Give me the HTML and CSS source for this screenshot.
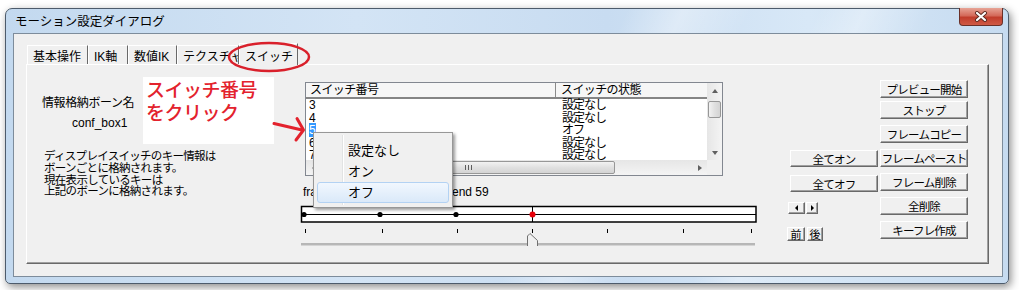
FILE: index.html
```html
<!DOCTYPE html>
<html lang="ja">
<head>
    <meta charset="UTF-8">
    <meta name="viewport" content="width=device-width, initial-scale=1.0">
    <title>モーション設定ダイアログ</title>
    <link rel="stylesheet" href="styles.css">
</head>
<body>
    <div class="window">
        <div class="titlebar">
            <span class="title">モーション設定ダイアログ</span>
            <div class="close-btn">
                <svg width="14" height="11" viewBox="0 0 14 11">
                    <path d="M3 2 L11 9 M11 2 L3 9" stroke="#5a2a22" stroke-width="4" stroke-linecap="round"/>
                    <path d="M3 2 L11 9 M11 2 L3 9" stroke="#ffffff" stroke-width="2.2" stroke-linecap="round"/>
                </svg>
            </div>
        </div>

        <div class="client">
            <div class="tabs">
                <div class="tab basic">基本操作</div>
                <div class="tab ik">IK軸</div>
                <div class="tab num">数値IK</div>
                <div class="tab tex">テクスチャ</div>
                <div class="tab active">スイッチ</div>
            </div>

            <div class="panel">
                <!-- 左側：ボーン情報 -->
                <div class="col-info">
                    <div class="bone-label">情報格納ボーン名</div>
                    <div class="bone-name">conf_box1</div>
                    <div class="desc">
                        <div>ディスプレイスイッチのキー情報は</div>
                        <div>ボーンごとに格納されます。</div>
                        <div>現在表示しているキーは</div>
                        <div>上記のボーンに格納されます。</div>
                    </div>
                </div>

                <!-- 中央：スイッチ一覧とタイムライン -->
                <div class="col-main">
                    <div class="listview">
                        <div class="lv-body">
                            <div class="lv-content">
                                <div class="lv-header">
                                    <div class="hd c1">スイッチ番号</div>
                                    <div class="hd c2">スイッチの状態</div>
                                </div>
                                <div class="lv-row"><span class="c1">3</span><span class="c2">設定なし</span></div>
                                <div class="lv-row"><span class="c1">4</span><span class="c2">設定なし</span></div>
                                <div class="lv-row"><span class="c1"><span class="sel">5</span></span><span class="c2">オフ</span></div>
                                <div class="lv-row"><span class="c1">6</span><span class="c2">設定なし</span></div>
                                <div class="lv-row"><span class="c1">7</span><span class="c2">設定なし</span></div>
                            </div>
                            <div class="vscroll">
                                <div class="sb-btn"><span class="tri-up"></span></div>
                                <div class="vthumb"></div>
                                <div class="sb-fill"></div>
                                <div class="sb-btn"><span class="tri-down"></span></div>
                            </div>
                        </div>
                        <div class="hscroll-row">
                            <div class="hscroll">
                                <div class="sb-btn"><span class="tri-left"></span></div>
                                <div class="hthumb"><span class="grip"></span></div>
                                <div class="sb-fill"></div>
                                <div class="sb-btn"><span class="tri-right"></span></div>
                            </div>
                            <div class="sb-corner"></div>
                        </div>
                    </div>

                    <div class="frame-info">
                        <span class="frame-cur">frame 56</span><span>end 59</span>
                    </div>

                    <svg class="timeline" width="460" height="46" viewBox="0 0 460 46">
                        <rect x="1.5" y="1.5" width="454.5" height="15.5" fill="#ffffff" stroke="#000" stroke-width="1.5"/>
                        <line x1="1.5" y1="9.5" x2="456" y2="9.5" stroke="#000" stroke-width="1"/>
                        <circle cx="4" cy="9.5" r="2.6" fill="#000"/>
                        <circle cx="80" cy="9.5" r="2.6" fill="#000"/>
                        <circle cx="156" cy="9.5" r="2.6" fill="#000"/>
                        <line x1="232.5" y1="1.5" x2="232.5" y2="17" stroke="#000" stroke-width="1"/>
                        <circle cx="232.5" cy="9.5" r="3" fill="#e8000a"/>
                        <g stroke="#000" stroke-width="1">
                            <line x1="5.5" y1="24" x2="5.5" y2="28"/>
                            <line x1="82.5" y1="24" x2="82.5" y2="28"/>
                            <line x1="157.5" y1="24" x2="157.5" y2="28"/>
                            <line x1="232.5" y1="24" x2="232.5" y2="28"/>
                            <line x1="307.5" y1="24" x2="307.5" y2="28"/>
                            <line x1="383.5" y1="24" x2="383.5" y2="28"/>
                            <line x1="451.5" y1="24" x2="451.5" y2="28"/>
                        </g>
                        <line x1="1" y1="39" x2="455" y2="39" stroke="#7c7c7c" stroke-width="1"/>
                        <line x1="1" y1="40" x2="455" y2="40" stroke="#b8b8b8" stroke-width="1"/>
                        <path d="M227.5 41 V31 L230 28.5 L237.5 35.5 V41 Z" fill="#f0f0f0"/>
                        <path d="M227.5 41 V31 L230 28.5 L237.5 35.5 V41" fill="none" stroke="#707070" stroke-width="1"/>
                    </svg>
                </div>

                <!-- 右側：ボタン群 -->
                <div class="col-buttons">
                    <div class="btn-col-left">
                        <div class="btn wide">全てオン</div>
                        <div class="btn wide off">全てオフ</div>
                        <div class="arrow-row">
                            <div class="btn arrow-l"><span class="tri-left dark"></span></div>
                            <div class="btn arrow-r"><span class="tri-right dark"></span></div>
                        </div>
                        <div class="nav-row">
                            <div class="btn nav prev">前</div>
                            <div class="btn nav next">後</div>
                        </div>
                    </div>
                    <div class="btn-col-right">
                        <div class="btn side">プレビュー開始</div>
                        <div class="btn side stop">ストップ</div>
                        <div class="btn side">フレームコピー</div>
                        <div class="btn side">フレームペースト</div>
                        <div class="btn side">フレーム削除</div>
                        <div class="btn side">全削除</div>
                        <div class="btn side">キーフレ作成</div>
                    </div>
                </div>
            </div>
        </div>
    </div>

    <!-- 注釈 -->
    <div class="note">スイッチ番号<br>をクリック</div>

    <svg class="note-arrow" width="40" height="32" viewBox="0 0 40 32">
        <path d="M4 9.5 L32 16" stroke="#e3222d" stroke-width="3" fill="none" stroke-linecap="round"/>
        <path d="M27 4.5 L33.5 16 L26 26" stroke="#e3222d" stroke-width="3" fill="none" stroke-linecap="round" stroke-linejoin="round"/>
    </svg>

    <svg class="tab-circle" width="90" height="36" viewBox="0 0 90 36">
        <ellipse cx="43" cy="17" rx="40" ry="14" fill="none" stroke="#d9202b" stroke-width="2.5"/>
    </svg>

    <div class="context-menu">
        <div class="menu-item">設定なし</div>
        <div class="menu-item">オン</div>
        <div class="menu-item hover">オフ</div>
    </div>
</body>
</html>
```

FILE: styles.css
```css
body {
    margin: 0;
    width: 1019px;
    height: 290px;
    position: relative;
    overflow: hidden;
    background: #ffffff;
    font-family: "Liberation Sans", "Noto Sans CJK JP", sans-serif;
    font-size: 12px;
    color: #000;
}

/* ウィンドウ枠 */
.window {
    margin: 8px 0 0 5px;
    width: 1004px;
    height: 276px;
    box-sizing: border-box;
    border: 1px solid #4d5b6b;
    border-radius: 7px 7px 5px 5px;
    background:
        linear-gradient(115deg, rgba(255,255,255,0) 55%, rgba(255,255,255,0.35) 60%, rgba(255,255,255,0) 66%, rgba(255,255,255,0) 72%, rgba(255,255,255,0.3) 76%, rgba(255,255,255,0) 82%),
        linear-gradient(to right, #c3d9ef, #d3e4f5 35%, #c8dcf1 60%, #d8e8f7 80%, #c6dbf0);
    box-shadow: 2px 3px 8px rgba(0,0,0,0.45);
}

.titlebar {
    display: flex;
    height: 24px;
}

.title {
    padding: 6px 0 0 9px;
    line-height: 14px;
    font-size: 12.5px;
}

.close-btn {
    margin: -1px 5px 0 auto;
    width: 44px;
    height: 18px;
    box-sizing: border-box;
    border: 1px solid #6a3028;
    border-top: none;
    border-radius: 0 0 4px 4px;
    background: linear-gradient(#e7a496, #d46a5a 45%, #c13d2c 55%, #cf5a45);
    display: flex;
    align-items: center;
    justify-content: center;
}

.client {
    margin-left: 7px;
    width: 990px;
    height: 244px;
    box-sizing: border-box;
    border: 1px solid #7d8c9b;
    background: #f0f0f0;
}

/* タブ */
.tabs {
    display: flex;
    margin: 11px 0 0 13px;
    height: 19px;
}

.tab {
    box-sizing: border-box;
    height: 19px;
    padding: 4px 0 0 5px;
    line-height: 14px;
    border-top: 1px solid #fff;
    border-left: 1px solid #fff;
    border-right: 1px solid #696969;
    background: #f0f0f0;
    white-space: nowrap;
    overflow: hidden;
}

.tab.basic { width: 61px; }
.tab.ik { width: 40px; }
.tab.num { width: 49px; }
.tab.tex { width: 62px; }

.tab.active {
    width: 59px;
    height: 22px;
    margin-top: -2px;
    padding-top: 6px;
    position: relative;
    z-index: 1;
}

.panel {
    margin-left: 12px;
    width: 963px;
    height: 200px;
    box-sizing: border-box;
    border: 1px solid;
    border-color: #fff #696969 #696969 #fff;
    box-shadow: inset -1px -1px 0 #a0a0a0;
    display: flex;
}

/* 左カラム */
.col-info {
    width: 277px;
    flex-shrink: 0;
}

.bone-label {
    margin-top: 31px;
    padding-left: 15px;
    line-height: 14px;
    letter-spacing: -0.4px;
}

.bone-name {
    margin-top: 6px;
    padding-left: 45px;
    line-height: 14px;
}

.desc {
    margin-top: 21px;
    padding-left: 17px;
    font-size: 11.5px;
    line-height: 11.8px;
    letter-spacing: -0.7px;
    white-space: nowrap;
}

/* 中央カラム */
.col-main {
    width: 456px;
    flex-shrink: 0;
}

.listview {
    margin: 17px 0 0 1px;
    width: 418px;
    height: 94px;
    box-sizing: border-box;
    border: 1px solid #828790;
    background: #fff;
    display: flex;
    flex-direction: column;
    overflow: hidden;
}

.lv-body {
    flex: 1;
    display: flex;
    min-height: 0;
}

.lv-content {
    flex: 1;
    overflow: hidden;
}

.lv-header {
    display: flex;
    height: 16px;
    box-sizing: border-box;
    border-bottom: 2px solid #858585;
    background: #f6f6f6;
}

.hd {
    line-height: 14px;
    letter-spacing: -0.6px;
    white-space: nowrap;
}

.hd.c1 {
    width: 250px;
    box-sizing: border-box;
    padding-left: 4px;
    border-right: 1px solid #8a8a8a;
}

.hd.c2 {
    padding-left: 5px;
}

.lv-row {
    display: flex;
    line-height: 12.5px;
    height: 12.5px;
    letter-spacing: -1px;
    white-space: nowrap;
}

.lv-row .c1 {
    width: 250px;
    box-sizing: border-box;
    padding-left: 3px;
}

.lv-row .c2 {
    padding-left: 6px;
}

.sel {
    background: #3399ff;
    color: #fff;
    padding: 0 1px 0 0;
}

/* スクロールバー */
.vscroll {
    width: 15px;
    display: flex;
    flex-direction: column;
    background: linear-gradient(to right, #e6e6e6, #f4f4f4);
}

.hscroll-row {
    height: 15px;
    display: flex;
}

.hscroll {
    flex: 1;
    display: flex;
    background: linear-gradient(#e6e6e6, #f4f4f4);
}

.sb-btn {
    width: 15px;
    height: 15px;
    flex-shrink: 0;
    display: flex;
    align-items: center;
    justify-content: center;
}

.sb-fill {
    flex: 1;
}

.sb-corner {
    width: 15px;
    background: #f0f0f0;
}

.vthumb {
    margin: 3px 1px 0 1px;
    height: 15px;
    border: 1px solid #979797;
    border-radius: 2px;
    background: linear-gradient(to right, #f2f2f2, #e0e0e0 50%, #d4d4d4);
}

.hthumb {
    margin: 1px 0;
    width: 294px;
    box-sizing: border-box;
    border: 1px solid #979797;
    border-radius: 2px;
    background: linear-gradient(#f2f2f2, #e0e0e0 50%, #d4d4d4);
    display: flex;
    align-items: center;
    justify-content: center;
}

.grip {
    width: 7px;
    height: 5px;
    background: repeating-linear-gradient(to right, #5c5c5c 0 1px, transparent 1px 3px);
}

.tri-up, .tri-down, .tri-left, .tri-right {
    width: 0;
    height: 0;
}

.tri-up {
    border-left: 3.5px solid transparent;
    border-right: 3.5px solid transparent;
    border-bottom: 4px solid #606060;
}

.tri-down {
    border-left: 3.5px solid transparent;
    border-right: 3.5px solid transparent;
    border-top: 4px solid #606060;
}

.tri-left {
    border-top: 3.5px solid transparent;
    border-bottom: 3.5px solid transparent;
    border-right: 4px solid #606060;
}

.tri-right {
    border-top: 3.5px solid transparent;
    border-bottom: 3.5px solid transparent;
    border-left: 4px solid #606060;
}

.tri-left.dark { border-right-color: #000; border-top-width: 3px; border-bottom-width: 3px; border-right-width: 3px; }
.tri-right.dark { border-left-color: #000; border-top-width: 3px; border-bottom-width: 3px; border-left-width: 3px; }

.frame-info {
    margin: 10px 0 0 -1px;
    height: 12px;
    line-height: 12px;
    white-space: nowrap;
}

.frame-cur {
    display: inline-block;
    width: 149px;
}

.timeline {
    display: block;
    margin: 7px 0 0 -4px;
}

/* 右側ボタン */
.col-buttons {
    flex: 1;
    display: flex;
    padding-left: 27px;
}

.btn {
    box-sizing: border-box;
    border: 1px solid;
    border-color: #fff #696969 #696969 #fff;
    box-shadow: inset -1px -1px 0 #a0a0a0;
    background: #f0f0f0;
    display: flex;
    align-items: center;
    justify-content: center;
    font-size: 11.5px;
    letter-spacing: -0.8px;
    white-space: nowrap;
}

.btn-col-left {
    width: 93px;
    padding-top: 85px;
}

.btn.wide {
    margin-left: 3px;
    width: 88px;
    height: 17px;
}

.btn.wide.off {
    margin-top: 8px;
}

.arrow-row {
    display: flex;
    gap: 1px;
    margin: 10px 0 0 1px;
}

.btn.arrow-l {
    width: 17px;
    height: 12px;
}

.btn.arrow-r {
    width: 12px;
    height: 12px;
}

.nav-row {
    display: flex;
    gap: 2px;
    margin-top: 13px;
}

.btn.nav {
    height: 14px;
    font-size: 11px;
    letter-spacing: 0;
}

.btn.prev { width: 18px; }
.btn.next { width: 16px; }

.btn-col-right {
    width: 88px;
    padding-top: 15px;
    display: flex;
    flex-direction: column;
    gap: 6px;
}

.btn.side {
    height: 18px;
}

.btn.side.stop {
    margin-top: -3px;
}

/* 注釈 */
.note {
    position: absolute;
    left: 143px;
    top: 77px;
    width: 131px;
    height: 67px;
    box-sizing: border-box;
    padding: 2px 0 0 3px;
    background: #fff;
    color: #e3222d;
    font-size: 19px;
    font-weight: 500;
    line-height: 23px;
    letter-spacing: -0.5px;
}

.note-arrow {
    position: absolute;
    left: 270px;
    top: 114px;
}

.tab-circle {
    position: absolute;
    left: 226px;
    top: 40px;
    z-index: 2;
}

/* コンテキストメニュー */
.context-menu {
    position: absolute;
    left: 313px;
    top: 132px;
    width: 140px;
    height: 76px;
    box-sizing: border-box;
    padding: 7px 3px 2px 3px;
    border: 1px solid #979797;
    background: #f0f0f0;
    box-shadow: 2px 2px 3px rgba(0,0,0,0.4);
    z-index: 3;
}

.context-menu::before {
    content: "";
    position: absolute;
    left: 28px;
    top: 2px;
    bottom: 2px;
    width: 1px;
    background: #e2e3e3;
    border-right: 1px solid #fff;
}

.menu-item {
    position: relative;
    height: 21px;
    line-height: 21px;
    padding-left: 31px;
    font-size: 13px;
}

.menu-item.hover {
    box-sizing: border-box;
    line-height: 19px;
    padding-left: 30px;
    border: 1px solid #b3d2f3;
    border-radius: 3px;
    background: linear-gradient(#f1f7fe, #dae9f9);
}
```
